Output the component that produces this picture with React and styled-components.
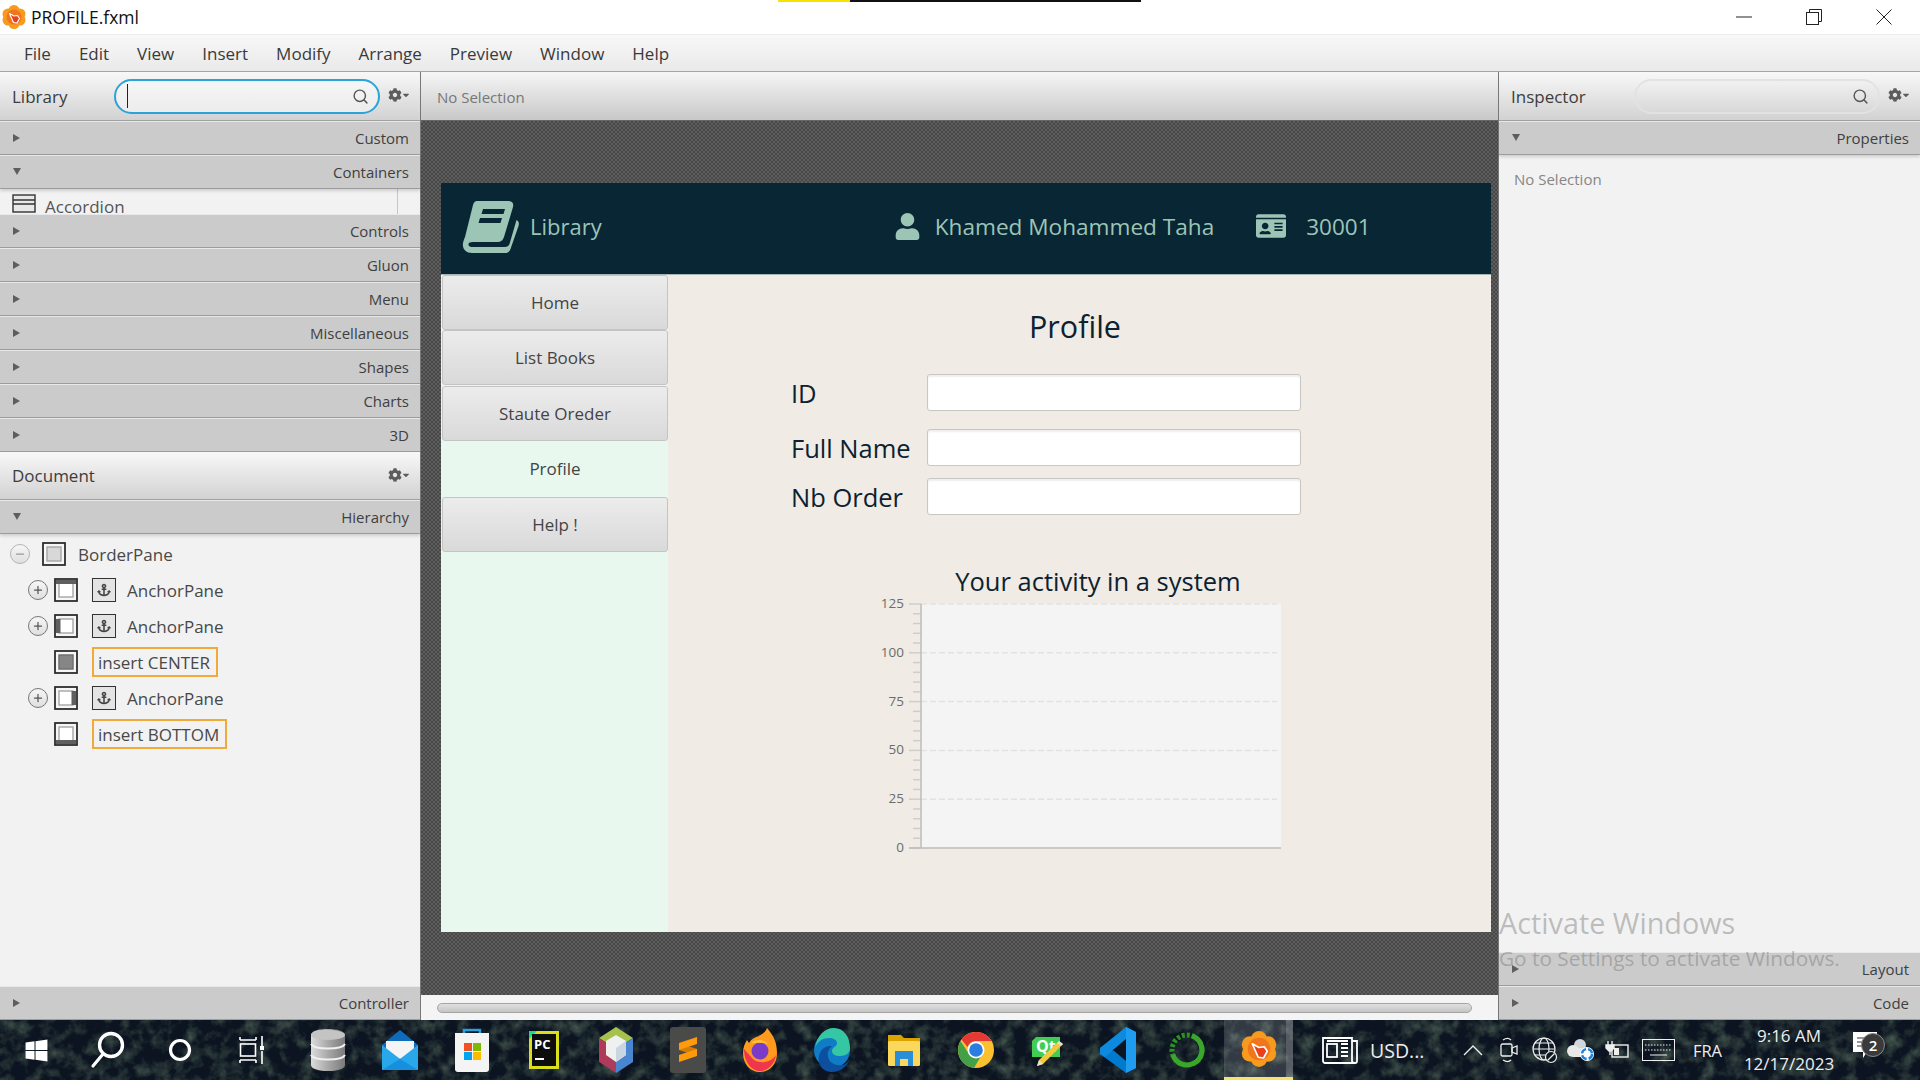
import React from 'react';
import styled, { createGlobalStyle } from 'styled-components';
import { Search, Plus, Minus } from 'lucide-react';
import { FaCog, FaCaretDown, FaAnchor, FaUser, FaIdCard, FaWindows } from 'react-icons/fa';

const GlobalStyle = createGlobalStyle`
  html, body {
    margin: 0;
    padding: 0;
    width: 1920px;
    height: 1080px;
    overflow: hidden;
    background: #f2f2f2;
    font-family: "Open Sans", "Noto Sans", sans-serif;
  }
  * { box-sizing: border-box; }
`;

const Shell = styled.div`
  width: 1920px;
  height: 1080px;
  display: flex;
  flex-direction: column;
  overflow: hidden;
  color: #333;
`;

const TitleBar = styled.div`
  position: relative;
  height: 34px;
  flex: none;
  background: #fff;
  display: flex;
  align-items: center;
  padding-left: 2px;
  font-size: 17.5px;
  color: #111;
`;

const TitleText = styled.span`
  margin-left: 5px;
`;

const ProgressStrip = styled.div`
  position: absolute;
  top: 0;
  left: 778px;
  width: 363px;
  height: 2px;
  background: linear-gradient(to right, #f6e400 0 72px, #111 72px);
`;

const WindowButtons = styled.div`
  margin-left: auto;
  display: flex;
`;

const WindowButton = styled.div`
  width: 70px;
  height: 34px;
  display: flex;
  align-items: center;
  justify-content: center;
  margin-right: ${p => p.$mr || 0}px;
`;

const MenuBar = styled.div`
  height: 38px;
  flex: none;
  display: flex;
  align-items: center;
  gap: 28px;
  padding-left: 24px;
  background: linear-gradient(#f8f8f8, #e9e9e9);
  border-top: 1px solid #ececec;
  border-bottom: 1px solid #a6a6a6;
  font-size: 17px;
  color: #3a3a3a;
`;

const Workspace = styled.div`
  height: 948px;
  flex: none;
  display: flex;
`;

const SidePanel = styled.div`
  position: relative;
  flex: none;
  width: ${p => p.$w}px;
  display: flex;
  flex-direction: column;
  background: #f2f2f2;
`;

const LeftPanel = styled(SidePanel)`
  border-right: 1px solid #777;
`;

const RightPanel = styled(SidePanel)`
  border-left: 1px solid #777;
`;

const PanelHeader = styled.div`
  height: ${p => p.$h || 49}px;
  flex: none;
  display: flex;
  align-items: center;
  padding: 0 9px 0 12px;
  background: linear-gradient(#f8f8f8, #d2d2d2);
  border-bottom: 1px solid #a2a2a2;
  font-size: 17px;
  color: #3c3c3c;
`;

const SearchBox = styled.div`
  width: ${p => p.$w}px;
  height: 35px;
  margin-left: ${p => p.$ml}px;
  border-radius: 18px;
  border: ${p => (p.$focus ? '2px solid #2ba3d6' : '2px solid #e2e2e2')};
  display: flex;
  align-items: center;
  justify-content: space-between;
  padding: 0 9px 0 11px;
  background: ${p => (p.$focus ? 'linear-gradient(#f6f6f6, #ececec)' : 'transparent')};
  color: #555;
`;

const Caret = styled.span`
  width: 1px;
  height: 24px;
  background: ${p => (p.$show ? '#222' : 'transparent')};
`;

const GearMenu = styled.div`
  margin-left: auto;
  display: flex;
  align-items: center;
  color: #5c5c5c;
  font-size: 14px;
  margin-top: -2px;
`;

const SmallCaret = styled(FaCaretDown)`
  font-size: 10px;
  margin-left: -1px;
`;

const PaneBar = styled.div`
  height: 34px;
  flex: none;
  display: flex;
  align-items: center;
  justify-content: space-between;
  padding: 0 11px 0 13px;
  background: #cbcbcb;
  border-top: 1px solid #e8e8e8;
  border-bottom: 1px solid #9c9c9c;
  font-size: 15px;
  color: #3f3f3f;
  ${p => p.$shadow && 'box-shadow: 0 2px 3px rgba(0,0,0,0.15); position: relative;'}
`;

const Triangle = styled.span`
  width: 0;
  height: 0;
  margin-top: -1px;
  ${p => p.$open
    ? 'border-left: 4.5px solid transparent; border-right: 4.5px solid transparent; border-top: 7px solid #5e5e5e;'
    : 'border-top: 4.5px solid transparent; border-bottom: 4.5px solid transparent; border-left: 7px solid #5e5e5e;'}
`;

const AccordionRow = styled.div`
  height: 25px;
  flex: none;
  width: 398px;
  overflow: hidden;
  border-right: 1px solid #c6c6c6;
  display: flex;
  align-items: flex-start;
  padding: 5px 0 0 12px;
  font-size: 17px;
  line-height: 26px;
  color: #555;
`;

const AccordionLabel = styled.span`
  margin-left: 9px;
`;

const TreeArea = styled.div`
  flex: 1;
  padding-top: 2px;
`;

const TreeRow = styled.div`
  height: 36px;
  display: flex;
  align-items: center;
  padding-left: ${p => (p.$level === 1 ? 10 : 28)}px;
  font-size: 17px;
  color: #484848;
`;

const Toggle = styled.span`
  width: 20px;
  height: 20px;
  flex: none;
  border-radius: 50%;
  border: 1.5px solid ${p => (p.$light ? '#b5b5b5' : '#777')};
  background: linear-gradient(#f6f6f6, #dfdfdf);
  display: flex;
  align-items: center;
  justify-content: center;
  color: ${p => (p.$light ? '#999' : '#555')};
  margin-right: ${p => (p.$light ? 12 : 6)}px;
  visibility: ${p => (p.$hidden ? 'hidden' : 'visible')};
`;

const TreeIcon = styled.span`
  width: 24px;
  height: 24px;
  flex: none;
  display: flex;
  margin-right: ${p => p.$mr}px;
`;

const AnchorBox = styled.span`
  width: 24px;
  height: 24px;
  flex: none;
  margin-right: 11px;
  border: 1.5px solid #333;
  background: #e4e4e4;
  display: flex;
  align-items: center;
  justify-content: center;
  color: #444;
  font-size: 14px;
`;

const InsertBox = styled.span`
  height: 30px;
  padding: 0 6px 0 4px;
  border: 2px solid #efaa3a;
  display: flex;
  align-items: center;
`;

const CenterColumn = styled.div`
  flex: 1;
  min-width: 0;
  display: flex;
  flex-direction: column;
`;

const SelectionBar = styled.div`
  height: 49px;
  flex: none;
  display: flex;
  align-items: center;
  padding: 2px 0 0 16px;
  background: linear-gradient(#f6f6f6, #c8c8c8);
  border-bottom: 1px solid #666;
  font-size: 15px;
  color: #777;
`;

const Canvas = styled.div`
  flex: 1;
  padding: 62px 7px 0 20px;
  background: conic-gradient(#484848 25%, #5d5d5d 0 50%, #484848 0 75%, #5d5d5d 0) 0 0 / 4px 4px;
`;

const ScrollArea = styled.div`
  height: 25px;
  flex: none;
  background: #f4f4f4;
  padding: 8px 26px 0 16px;
`;

const ScrollThumb = styled.div`
  height: 10px;
  border-radius: 5px;
  border: 1px solid #a5a5a5;
  background: linear-gradient(#e0e0e0, #c4c4c4);
`;

const AppWindow = styled.div`
  height: 749px;
  display: flex;
  flex-direction: column;
`;

const AppHeader = styled.header`
  height: 92px;
  flex: none;
  display: flex;
  align-items: center;
  background: #092635;
  border-bottom: 1px solid #a9b3b3;
  color: #9cc5b5;
  font-size: 22px;
  padding: 0 0 5px 21px;
`;

const BrandName = styled.span`
  margin-left: 11px;
`;

const HeaderName = styled.span`
  margin: 0 42px 0 14px;
  font-size: 22.6px;
`;

const UserIcon = styled(FaUser)`
  margin-left: 292px;
  font-size: 27px;
`;

const CardIcon = styled(FaIdCard)`
  font-size: 30px;
  margin-right: 20px;
`;

const HeaderNumber = styled.span`
  font-size: 22.5px;
`;

const AppBody = styled.div`
  flex: 1;
  display: flex;
  min-height: 0;
`;

const NavColumn = styled.nav`
  width: 227px;
  flex: none;
  background: #e8f8ef;
  padding-left: 1px;
`;

const NavItem = styled.div`
  height: 55px;
  margin-bottom: 0.4px;
  display: flex;
  align-items: center;
  justify-content: center;
  font-size: 17px;
  color: #444;
  ${p => !p.$plain && `
    border: 1.5px solid #c4c4c4;
    border-radius: 3px;
    background: linear-gradient(#ececec, #d9d9d9);
  `}
`;

const Content = styled.main`
  flex: 1;
  background: #f0ebe5;
  color: #0c2230;
`;

const PageTitle = styled.h1`
  margin: 32px 0 0;
  padding-left: 0;
  width: 814px;
  text-align: center;
  font-size: 30.5px;
  line-height: 38px;
  font-weight: 400;
`;

const Form = styled.div`
  margin: 29px 0 0 123px;
`;

const FormRow = styled.div`
  display: flex;
  align-items: center;
  height: 37px;
  margin-bottom: ${p => p.$mb}px;
`;

const FormLabel = styled.label`
  width: 136px;
  font-size: 25.5px;
`;

const TextField = styled.div`
  width: 374px;
  height: 37px;
  background: #fff;
  border: 1.5px solid #c9c7c4;
  border-radius: 3px;
  box-shadow: inset 0 2px 2px rgba(0, 0, 0, 0.07);
`;

const ChartBlock = styled.div`
  width: 436px;
  margin: 48px 0 0 212px;
`;

const ChartTitle = styled.div`
  height: 38px;
  text-align: center;
  font-size: 25.5px;
  line-height: 36px;
`;

const Chart = styled.svg`
  display: block;
  overflow: visible;
  font-size: 13.5px;
  fill: #6c6c6c;
`;

const Watermark = styled.div`
  position: absolute;
  left: 0;
  top: ${p => p.$top}px;
  font-size: ${p => p.$size}px;
  line-height: 1.2;
  white-space: nowrap;
  color: rgba(110, 110, 110, 0.42);
  pointer-events: none;
`;

const PanelNote = styled.div`
  flex: 1;
  padding: 14px 0 0 15px;
  font-size: 15px;
  color: #868686;
`;

const Taskbar = styled.footer`
  position: relative;
  isolation: isolate;
  height: 60px;
  flex: none;
  display: flex;
  align-items: center;
  background-color: #0b1420;
  color: #eee;
`;

const Wallpaper = styled.svg`
  position: absolute;
  inset: 0;
  z-index: -1;
`;

const SystemButtons = styled.div`
  display: flex;
`;

const AppButtons = styled.div`
  display: flex;
  margin-left: 4px;
`;

const TaskButton = styled.div`
  width: ${p => p.$w}px;
  height: 60px;
  flex: none;
  display: flex;
  align-items: center;
  justify-content: center;
  ${p => p.$active && `
    margin-left: 3px;
    background: linear-gradient(to right, rgba(255,255,255,0.16) 62px, rgba(255,255,255,0.3) 62px);
    border-bottom: 3px solid #f4e36e;
  `}
`;

const NewsBlock = styled.div`
  display: flex;
  align-items: center;
  margin-left: 29px;
  font-size: 19.5px;
`;

const NewsLabel = styled.span`
  margin-left: 12px;
`;

const Tray = styled.div`
  margin-left: auto;
  display: flex;
  align-items: center;
`;

const TraySlot = styled.div`
  width: ${p => p.$w}px;
  height: 60px;
  display: flex;
  align-items: center;
  justify-content: center;
  font-size: ${p => p.$fs || 16}px;
`;

const Clock = styled.div`
  width: 110px;
  margin-right: 2px;
  text-align: center;
  font-size: 17px;
  line-height: 28px;
`;

const Badge = styled.span`
  position: absolute;
  left: 15px;
  top: 13px;
  width: 24px;
  height: 24px;
  border-radius: 50%;
  background: #3a3a3a;
  border: 1px solid #888;
  display: flex;
  align-items: center;
  justify-content: center;
  font-size: 15px;
  font-weight: 600;
  color: #fff;
`;

const NotifySlot = styled.div`
  position: relative;
  width: 51px;
  height: 60px;
  margin-right: 23px;
  padding-top: 12px;
  padding-left: 7px;
`;

// --- icons ---

const Gear = () => (
  <GearMenu>
    <FaCog />
    <SmallCaret />
  </GearMenu>
);

// foliage noise of the desktop wallpaper seen through the taskbar
const ForestWallpaper = () => (
  <Wallpaper width="1920" height="60" viewBox="0 0 1920 60">
    <filter id="forest" x="0" y="0" width="100%" height="100%" colorInterpolationFilters="sRGB">
      <feTurbulence type="fractalNoise" baseFrequency="0.07" numOctaves="4" seed="8" />
      <feColorMatrix values="0 0 0 0 0.34  0 0 0 0 0.42  0 0 0 0 0.36  1.5 0 0 0 -0.62" />
    </filter>
    <rect width="1920" height="60" filter="url(#forest)" />
  </Wallpaper>
);

const RegionIcon = ({ region }) => {
  const hl = '#5f5f5f';
  return (
    <svg width="24" height="24" viewBox="0 0 24 24">
      <rect x="1" y="1" width="22" height="22" fill="#f6f6f6" stroke="#2e2e2e" strokeWidth="1.8" />
      <rect x="5" y="5" width="14" height="14" fill={region === 'none' ? '#d8d8d8' : '#fff'} stroke="#a5a5a5" strokeWidth="1.400" />
      {region === 'top' && <rect x="2" y="2" width="20" height="4" fill={hl} />}
      {region === 'bottom' && <rect x="2" y="18" width="20" height="4" fill={hl} />}
      {region === 'left' && <rect x="2" y="5" width="4.500" height="14" fill={hl} />}
      {region === 'right' && <rect x="17.500" y="5" width="4.500" height="14" fill={hl} />}
      {region === 'center' && <rect x="5" y="5" width="14" height="14" fill="#868686" stroke="#666" />}
    </svg>
  );
};

const AccordionIcon = () => (
  <svg width="24" height="19" viewBox="0 0 24 19">
    <rect x="1" y="1" width="22" height="17" fill="#e8e8e8" stroke="#333" strokeWidth="1.4" />
    <path d="M1 6h22M1 10h22" stroke="#333" strokeWidth="1.4" />
  </svg>
);

const FlowerLogo = ({ size }) => (
  <svg width={size} height={size} viewBox="0 0 24 24">
    <g fill="#f79a1e">
      <circle cx="12" cy="5.5" r="5.5" />
      <circle cx="12" cy="18.5" r="5.5" />
      <circle cx="6" cy="9" r="5.5" />
      <circle cx="18" cy="9" r="5.5" />
      <circle cx="6" cy="15" r="5.5" />
      <circle cx="18" cy="15" r="5.5" />
    </g>
    <circle cx="12" cy="12" r="7.5" fill="#ee6a1f" opacity="0.75" />
    <path d="M7.5 8.5l4.5 2.5 3.5-.5 2 3-2.5 4.5-3.5-.5-2-4.5z" fill="#e8401c" stroke="#fff" strokeWidth="1.1" strokeLinejoin="round" />
  </svg>
);

const BookLogo = () => (
  <svg width="57" height="53" viewBox="0 0 57 53">
    <path
      d="M15 1h31c4 0 6 2 5 6l-9 30c-1 3-3 5-7 5H11c-3 0-5 1-4.500 3 .5 1.500 2 2 4 2h32c3 0 4-1 5-3l7-24c2 1 3 3 2 6l-8 23c-1 3-3 4-6 4H10c-6 0-10-4-9-10 .5-2 1-4 2-6L11 5c1-3 2-4 4-4z"
      fill="#9cc5b5"
    />
    <path d="M21 9h22l-1.500 5h-22zM18 18h22l-1.500 5h-22z" fill="#092635" />
  </svg>
);

const SearchGlyph = () => (
  <svg width="36" height="40" viewBox="0 0 36 40" fill="none" stroke="#fff">
    <circle cx="21" cy="15" r="11.500" strokeWidth="3.4" />
    <path d="M13 24L3 36" strokeWidth="3.2" strokeLinecap="round" />
  </svg>
);

const CortanaGlyph = () => (
  <svg width="26" height="26" viewBox="0 0 26 26" fill="none">
    <circle cx="13" cy="13" r="9.500" stroke="#fff" strokeWidth="3.200" />
  </svg>
);

const TaskViewGlyph = () => (
  <svg width="26" height="28" viewBox="0 0 26 28" fill="none" stroke="#fff" strokeWidth="1.600">
    <path d="M1 4h16M1 1v3M17 1v3M1 24h16M1 24v3M17 24v3" />
    <rect x="1.500" y="8" width="15" height="12" />
    <path d="M23 0v10M23 15v13" />
    <rect x="21" y="10" width="4" height="4" fill="#fff" stroke="none" />
  </svg>
);

const DbGlyph = () => (
  <svg width="36" height="42" viewBox="0 0 36 42">
    <defs>
      <linearGradient id="dbg" x1="0" x2="1">
        <stop offset="0" stopColor="#dcdcdc" />
        <stop offset="0.5" stopColor="#a8a8a8" />
        <stop offset="1" stopColor="#7b7b7b" />
      </linearGradient>
    </defs>
    <path d="M1 6c0-8 34-8 34 0v30c0 8-34 8-34 0z" fill="url(#dbg)" />
    <ellipse cx="18" cy="6" rx="17" ry="5" fill="#c4c4c4" />
    <path d="M1 15c3 6 31 6 34 0M1 26c3 6 31 6 34 0" fill="none" stroke="#f0f0f0" strokeWidth="2" />
  </svg>
);

const MailGlyph = () => (
  <svg width="36" height="42" viewBox="0 0 36 42">
    <path d="M18 1l18 15v25H0V16z" fill="#0f6cbd" />
    <path d="M4 12h28v10L18 30 4 22z" fill="#f4f4f4" />
    <path d="M0 16l18 14 18-14v25H0z" fill="#28a8ea" />
    <path d="M0 41l18-11 18 11z" fill="#1490df" />
  </svg>
);

const StoreGlyph = () => (
  <svg width="36" height="46" viewBox="0 0 36 46">
    <path d="M10 10V3h16v7" fill="none" stroke="#2b9fe0" strokeWidth="2.500" />
    <path d="M1 6h34v36c0 2-1 3-3 3H4c-2 0-3-1-3-3z" fill="#f4f4f4" />
    <rect x="10" y="16" width="8" height="8" fill="#f25022" />
    <rect x="19" y="16" width="8" height="8" fill="#7fba00" />
    <rect x="10" y="25" width="8" height="8" fill="#00a4ef" />
    <rect x="19" y="25" width="8" height="8" fill="#ffb900" />
  </svg>
);

const PyCharmGlyph = () => (
  <svg width="30" height="38" viewBox="0 0 30 38">
    <rect x="0" y="0" width="30" height="38" fill="#d9de1f" />
    <path d="M0 0h8L0 8z" fill="#21d789" />
    <rect x="3" y="3" width="24" height="32" fill="#0d0d0d" />
    <text x="5" y="18" fontSize="13" fontWeight="700" fill="#fff" fontFamily="Open Sans">PC</text>
    <rect x="6" y="27" width="9" height="2" fill="#fff" />
  </svg>
);

const CubeGlyph = () => (
  <svg width="34" height="46" viewBox="0 0 34 46">
    <path d="M17 0l17 11L17 22 0 11z" fill="#a6c24d" />
    <path d="M0 11l17 11v24L0 35z" fill="#b03a5a" />
    <path d="M34 11L17 22v24l17-11z" fill="#4a86cf" />
    <path d="M17 8l10 6v14l-10 7-10-7V14z" fill="#eef1ef" />
    <path d="M17 21l10-7v14l-10 7z" fill="#c8d6e2" />
  </svg>
);

const SublimeGlyph = () => (
  <svg width="36" height="46" viewBox="0 0 36 46">
    <rect x="0" y="0" width="36" height="46" rx="3" fill="#4a4a48" />
    <path d="M9 16l18 6v7L9 23z" fill="#d97b00" />
    <path d="M9 16l18-6v7L9 23zM27 22v7L9 35v-7z" fill="#ff9a0a" />
  </svg>
);

const FirefoxGlyph = () => (
  <svg width="34" height="46" viewBox="0 0 34 46">
    <path d="M24 1c7 8 10 15 10 25 0 11-7 19-17 19S0 37 0 26c0-6 2-10 4-13l2 3c2-4 6-6 10-7-1 0 6-2 8-8z" fill="#ff9a1f" />
    <path d="M1 22c0 12 7 22 16 22 8 0 15-7 16-16-5 8-18 10-24 3z" fill="#f0364e" />
    <circle cx="17" cy="24" r="8.500" fill="#7a3cc8" />
    <path d="M8 16c5-4 12-4 17 1-6-2-12-1-17-1z" fill="#ffc43a" />
  </svg>
);

const EdgeGlyph = () => (
  <svg width="36" height="46" viewBox="0 0 36 46">
    <circle cx="18" cy="23" r="18" fill="#0f7cc5" />
    <path d="M1 21C3 9 10 1 20 1c10 0 16 9 16 20 0 5-4 8-10 8-5 0-8-2-8-5 0-4 5-4 5-8 0-3-4-5-8-5-7 0-12 4-14 10z" fill="#35c6a4" />
    <path d="M18 45C8 45 2 36 6 26c3-7 9-7 12-7-3 3-5 6-4 11 1 6 8 9 14 8 2 0 5-2 7-4-3 6-9 11-17 11z" fill="#0c4f9e" />
  </svg>
);

const ExplorerGlyph = () => (
  <svg width="32" height="32" viewBox="0 0 32 32">
    <path d="M0 1h13l3 3h16v6H0z" fill="#dca200" />
    <rect x="0" y="7" width="32" height="25" rx="1.500" fill="#fbd75b" />
    <path d="M7 32V17h18v15h-5v-7h-8v7z" fill="#2a8fd8" />
  </svg>
);

const ChromeGlyph = () => (
  <svg width="36" height="46" viewBox="0 0 36 46">
    <g transform="translate(0 5)">
      <circle cx="18" cy="18" r="18" fill="#fbc02d" />
      <path d="M18 0a18 18 0 0 1 15.600 9H18a9 9 0 0 0-8.500 6L3.400 7.500A18 18 0 0 1 18 0z" fill="#e53935" />
      <path d="M2.500 9A18 18 0 0 0 16 36l7-12a9 9 0 0 1-12-2z" fill="#43a047" />
      <circle cx="18" cy="18" r="8.500" fill="#fff" />
      <circle cx="18" cy="18" r="6.800" fill="#2a7de1" />
    </g>
  </svg>
);

const QtGlyph = () => (
  <svg width="32" height="34" viewBox="0 0 32 34">
    <path d="M4 4h24v20H0V8z" fill="#41cd52" />
    <text x="4" y="19" fontSize="16" fontWeight="700" fill="#fff" fontFamily="Open Sans">Qt</text>
    <path d="M27 8l4 3L11 31l-6 2 2-6z" fill="#f6c93c" />
    <path d="M27 8l4 3-2 2-4-3z" fill="#ddd" />
    <path d="M7 27l4 4-6 2z" fill="#e9e2cf" />
  </svg>
);

const VsCodeGlyph = () => (
  <svg width="36" height="46" viewBox="0 0 36 46">
    <path d="M26 0l10 5v36l-10 5L0 27v-6l5-3 8 6z" fill="#007acc" />
    <path d="M0 21v6l5 3 21-18V0z" fill="#0d8ade" />
    <path d="M26 12v22l-13-11z" fill="#0b1420" />
    <path d="M36 5v36l-10 5V0z" fill="#1f9cf0" />
  </svg>
);

const RingGlyph = () => (
  <svg width="36" height="46" viewBox="0 0 36 46" fill="none">
    <circle cx="18" cy="23" r="15" stroke="#2e8f26" strokeWidth="5" strokeDasharray="3 2" />
    <circle cx="18" cy="23" r="15" stroke="#39a82a" strokeWidth="5" strokeDasharray="60 40" transform="rotate(-70 18 23)" />
  </svg>
);

const NewsGlyph = () => (
  <svg width="36" height="28" viewBox="0 0 36 28" fill="none" stroke="#fff" strokeWidth="1.800">
    <path d="M1 2h29v23c0 1 1 2 3 2H3c-1 0-2-1-2-2z" />
    <path d="M30 5h5v20c0 1-1 2-2 2" />
    <rect x="5" y="8" width="10" height="13" />
    <path d="M19 8h7M19 12h7M19 16h7M19 20h7M5 5h21" />
  </svg>
);

const ChevronGlyph = () => (
  <svg width="20" height="12" viewBox="0 0 20 12" fill="none" stroke="#eee" strokeWidth="1.400">
    <path d="M1 11l9-9 9 9" />
  </svg>
);

const CameraGlyph = () => (
  <svg width="18" height="26" viewBox="0 0 18 26" fill="none" stroke="#eee" strokeWidth="1.300">
    <rect x="1" y="7" width="11" height="12" rx="1.500" />
    <path d="M12 11l5-2v8l-5-2zM3 3c3-2 6-2 8 0M3 23c3 2 6 2 8 0" />
  </svg>
);

const GlobeGlyph = () => (
  <svg width="26" height="28" viewBox="0 0 26 28" fill="none" stroke="#eee" strokeWidth="1.200">
    <circle cx="12" cy="13" r="11" />
    <ellipse cx="12" cy="13" rx="5" ry="11" />
    <path d="M1 13h22M3 7h18M3 19h14" />
    <circle cx="19" cy="21" r="5.500" fill="#0f1822" />
    <path d="M15.500 24.500l7-7" />
  </svg>
);

const CloudGlyph = () => (
  <svg width="28" height="24" viewBox="0 0 28 24">
    <circle cx="13" cy="7" r="6" fill="#cfd6dc" />
    <circle cx="6" cy="13" r="6" fill="#e8e8e8" />
    <rect x="6" y="10" width="14" height="9" fill="#e8e8e8" />
    <circle cx="20" cy="16" r="7" fill="#fff" />
    <circle cx="20" cy="16" r="5" fill="none" stroke="#1e86dc" strokeWidth="2.400" strokeDasharray="6 2" />
  </svg>
);

const BatteryGlyph = () => (
  <svg width="24" height="20" viewBox="0 0 24 20" fill="none" stroke="#eee" strokeWidth="1.400">
    <rect x="7" y="5" width="16" height="12" />
    <path d="M3 1v4M7 1v4M1 5h8v3l-3 3H4L1 8zM5 11v4" fill="#eee" />
    <rect x="9" y="8" width="5" height="7" fill="#eee" stroke="none" />
  </svg>
);

const KeyboardGlyph = () => (
  <svg width="33" height="22" viewBox="0 0 33 22" fill="none" stroke="#eee">
    <rect x="0.500" y="0.500" width="32" height="21" />
    <path d="M3 6h27M3 11h27" strokeDasharray="1.500 1.500" />
    <path d="M8 16h17" />
  </svg>
);

const NotifyGlyph = () => (
  <svg width="24" height="28" viewBox="0 0 24 28">
    <path d="M0 0h24v20H14l-4 6v-6H0z" fill="#fff" />
    <path d="M4 6h16M4 10h16M4 14h10" stroke="#333" strokeWidth="1.200" />
  </svg>
);

const menus = ['File', 'Edit', 'View', 'Insert', 'Modify', 'Arrange', 'Preview', 'Window', 'Help'];
const closedLibrary = ['Controls', 'Gluon', 'Menu', 'Miscellaneous', 'Shapes', 'Charts', '3D'];
const navItems = ['Home', 'List Books', 'Staute Oreder', 'Profile', 'Help !'];
const systemIcons = [<FaWindows size={25} color="#fff" />, <SearchGlyph />, <CortanaGlyph />, <TaskViewGlyph />];
const appIcons = [
  <DbGlyph />, <MailGlyph />, <StoreGlyph />, <PyCharmGlyph />, <CubeGlyph />, <SublimeGlyph />, <FirefoxGlyph />,
  <EdgeGlyph />, <ExplorerGlyph />, <ChromeGlyph />, <QtGlyph />, <VsCodeGlyph />, <RingGlyph />,
];

const ticks = [];
for (let i = 0; i <= 25; i++) ticks.push(i);

function ActivityChart() {
  const top = 603;
  const bottom = 847;
  const step = (bottom - top) / 25;
  return (
    <Chart width="436" height="260" viewBox="880 600 436 260">
      <rect x="921" y={top} width="360" height={bottom - top} fill="#f4f4f4" />
      {ticks.map(i => {
        const y = top + i * step;
        const major = i % 5 === 0;
        return (
          <g key={i}>
            <line x1={major ? 909 : 913} x2="921" y1={y} y2={y} stroke="#cfcdca" strokeWidth="1.500" />
            {major && i < 25 && (
              <line x1="921" x2="1277" y1={y} y2={y} stroke="#e3e2e0" strokeWidth="1.500" strokeDasharray="6 3" />
            )}
            {major && (
              <text x="904" y={y + 4} textAnchor="end">{125 - i * 5}</text>
            )}
          </g>
        );
      })}
      <line x1="921" x2="921" y1={top} y2={bottom} stroke="#bdbcba" strokeWidth="1.500" />
      <line x1="909" x2="1281" y1={bottom} y2={bottom} stroke="#bdbcba" strokeWidth="1.500" />
    </Chart>
  );
}

export default function App() {
  return (
    <Shell>
      <GlobalStyle />
      <TitleBar>
        <FlowerLogo size={24} />
        <TitleText>PROFILE.fxml</TitleText>
        <ProgressStrip />
        <WindowButtons>
          <WindowButton>
            <svg width="16" height="2" viewBox="0 0 16 2"><path d="M0 1h16" stroke="#222" /></svg>
          </WindowButton>
          <WindowButton>
            <svg width="16" height="16" viewBox="0 0 16 16" fill="none" stroke="#222">
              <rect x="0.500" y="3.500" width="12" height="12" />
              <path d="M3.500 3.500v-3h12v12h-3" />
            </svg>
          </WindowButton>
          <WindowButton $mr={1}>
            <svg width="16" height="16" viewBox="0 0 16 16" stroke="#222"><path d="M0.500 0.500l15 15M15.500 0.500l-15 15" /></svg>
          </WindowButton>
        </WindowButtons>
      </TitleBar>

      <MenuBar>
        {menus.map(m => <span key={m}>{m}</span>)}
      </MenuBar>

      <Workspace>
        <LeftPanel $w={421}>
          <PanelHeader>
            Library
            <SearchBox $w={266} $ml={47} $focus>
              <Caret $show />
              <Search size={17} />
            </SearchBox>
            <Gear />
          </PanelHeader>
          <PaneBar><Triangle />Custom</PaneBar>
          <PaneBar $shadow><Triangle $open />Containers</PaneBar>
          <AccordionRow>
            <AccordionIcon />
            <AccordionLabel>Accordion</AccordionLabel>
          </AccordionRow>
          {closedLibrary.map(name => (
            <PaneBar key={name}><Triangle />{name}</PaneBar>
          ))}
          <PanelHeader $h={48}>
            Document
            <Gear />
          </PanelHeader>
          <PaneBar $shadow><Triangle $open />Hierarchy</PaneBar>
          <TreeArea>
            <TreeRow $level={1}>
              <Toggle $light><Minus size={12} strokeWidth={2.5} /></Toggle>
              <TreeIcon $mr={12}><RegionIcon region="none" /></TreeIcon>
              BorderPane
            </TreeRow>
            <TreeRow $level={2}>
              <Toggle><Plus size={12} strokeWidth={2.5} /></Toggle>
              <TreeIcon $mr={14}><RegionIcon region="top" /></TreeIcon>
              <AnchorBox><FaAnchor /></AnchorBox>
              AnchorPane
            </TreeRow>
            <TreeRow $level={2}>
              <Toggle><Plus size={12} strokeWidth={2.5} /></Toggle>
              <TreeIcon $mr={14}><RegionIcon region="left" /></TreeIcon>
              <AnchorBox><FaAnchor /></AnchorBox>
              AnchorPane
            </TreeRow>
            <TreeRow $level={2}>
              <Toggle $hidden />
              <TreeIcon $mr={14}><RegionIcon region="center" /></TreeIcon>
              <InsertBox>insert CENTER</InsertBox>
            </TreeRow>
            <TreeRow $level={2}>
              <Toggle><Plus size={12} strokeWidth={2.5} /></Toggle>
              <TreeIcon $mr={14}><RegionIcon region="right" /></TreeIcon>
              <AnchorBox><FaAnchor /></AnchorBox>
              AnchorPane
            </TreeRow>
            <TreeRow $level={2}>
              <Toggle $hidden />
              <TreeIcon $mr={14}><RegionIcon region="bottom" /></TreeIcon>
              <InsertBox>insert BOTTOM</InsertBox>
            </TreeRow>
          </TreeArea>
          <PaneBar><Triangle />Controller</PaneBar>
        </LeftPanel>

        <CenterColumn>
          <SelectionBar>No Selection</SelectionBar>
          <Canvas>
            <AppWindow>
              <AppHeader>
                <BookLogo />
                <BrandName>Library</BrandName>
                <UserIcon />
                <HeaderName>Khamed Mohammed Taha</HeaderName>
                <CardIcon />
                <HeaderNumber>30001</HeaderNumber>
              </AppHeader>
              <AppBody>
                <NavColumn>
                  {navItems.map(item => (
                    <NavItem key={item} $plain={item === 'Profile'}>{item}</NavItem>
                  ))}
                </NavColumn>
                <Content>
                  <PageTitle>Profile</PageTitle>
                  <Form>
                    <FormRow $mb={18}>
                      <FormLabel>ID</FormLabel>
                      <TextField />
                    </FormRow>
                    <FormRow $mb={12}>
                      <FormLabel>Full Name</FormLabel>
                      <TextField />
                    </FormRow>
                    <FormRow $mb={0}>
                      <FormLabel>Nb Order</FormLabel>
                      <TextField />
                    </FormRow>
                  </Form>
                  <ChartBlock>
                    <ChartTitle>Your activity in a system</ChartTitle>
                    <ActivityChart />
                  </ChartBlock>
                </Content>
              </AppBody>
            </AppWindow>
          </Canvas>
          <ScrollArea><ScrollThumb /></ScrollArea>
        </CenterColumn>

        <RightPanel $w={422}>
          <PanelHeader>
            Inspector
            <SearchBox $w={246} $ml={48}>
              <Caret />
              <Search size={17} />
            </SearchBox>
            <Gear />
          </PanelHeader>
          <PaneBar $shadow><Triangle $open />Properties</PaneBar>
          <PanelNote>No Selection</PanelNote>
          <PaneBar><Triangle />Layout</PaneBar>
          <PaneBar><Triangle />Code</PaneBar>
          <Watermark $top={834} $size={28.8}>Activate Windows</Watermark>
          <Watermark $top={874} $size={20.8}>Go to Settings to activate Windows.</Watermark>
        </RightPanel>
      </Workspace>

      <Taskbar>
        <ForestWallpaper />
        <SystemButtons>
          {systemIcons.map((icon, i) => <TaskButton key={i} $w={72}>{icon}</TaskButton>)}
        </SystemButtons>
        <AppButtons>
          {appIcons.map((icon, i) => <TaskButton key={i} $w={i < 11 ? 72 : 68.5}>{icon}</TaskButton>)}
          <TaskButton $w={69} $active><FlowerLogo size={36} /></TaskButton>
        </AppButtons>
        <NewsBlock>
          <NewsGlyph />
          <NewsLabel>USD...</NewsLabel>
        </NewsBlock>
        <Tray>
          <TraySlot $w={36}><ChevronGlyph /></TraySlot>
          <TraySlot $w={36}><CameraGlyph /></TraySlot>
          <TraySlot $w={36}><GlobeGlyph /></TraySlot>
          <TraySlot $w={36}><CloudGlyph /></TraySlot>
          <TraySlot $w={36}><BatteryGlyph /></TraySlot>
          <TraySlot $w={46}><KeyboardGlyph /></TraySlot>
          <TraySlot $w={53} $fs={16.5}>FRA</TraySlot>
          <Clock>
            <div>9:16 AM</div>
            <div>12/17/2023</div>
          </Clock>
          <NotifySlot>
            <NotifyGlyph />
            <Badge>2</Badge>
          </NotifySlot>
        </Tray>
      </Taskbar>
    </Shell>
  );
}
